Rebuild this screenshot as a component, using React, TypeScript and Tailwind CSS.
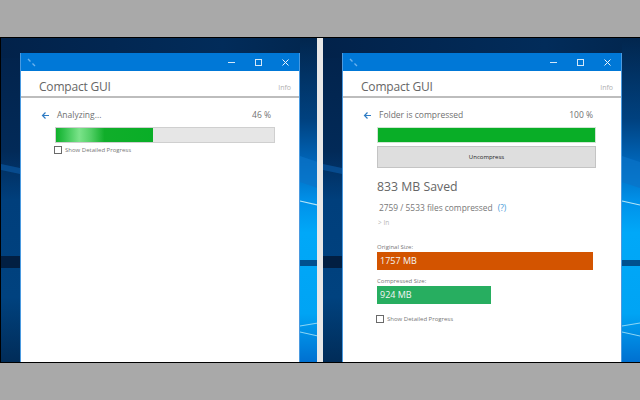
const FONT = "font-['Open_Sans','Noto_Sans',sans-serif]"

function Wallpaper({ id }: { id: string }) {
  return (
    <svg className="absolute inset-0" width="317" height="324" viewBox="0 0 317 324">
      <defs>
        <linearGradient id={`${id}V`} x1="0" y1="0" x2="0" y2="1">
          <stop offset="0" stopColor="#02224a" />
          <stop offset="0.35" stopColor="#022a58" />
          <stop offset="0.5" stopColor="#003f7c" />
          <stop offset="0.8" stopColor="#00427f" />
          <stop offset="1" stopColor="#012c58" />
        </linearGradient>
        <linearGradient id={`${id}R`} x1="0" y1="0" x2="0" y2="1">
          <stop offset="0" stopColor="#02264e" />
          <stop offset="0.25" stopColor="#00417f" />
          <stop offset="0.38" stopColor="#0065b8" />
          <stop offset="0.5" stopColor="#0090e8" />
          <stop offset="0.6" stopColor="#00a8f8" />
          <stop offset="0.85" stopColor="#00a4f4" />
          <stop offset="1" stopColor="#0070d0" />
        </linearGradient>
        <linearGradient id={`${id}T`} x1="0" y1="0" x2="1" y2="0">
          <stop offset="0" stopColor="#02224a" />
          <stop offset="0.7" stopColor="#022c5a" />
          <stop offset="1" stopColor="#02264e" />
        </linearGradient>
      </defs>
      <rect width="317" height="324" fill={`url(#${id}V)`} />
      <rect width="317" height="20" fill={`url(#${id}T)`} />
      <rect x="299" width="18" height="324" fill={`url(#${id}R)`} />
      <path d="M299 118L317 124V150L299 144Z" fill="#0a74c8" opacity="0.7" />
      <path d="M0 126L19 130V136L0 132Z" fill="#0c5ba8" opacity="0.6" />
      <rect y="218" width="20" height="12" fill="#021f42" />
      <rect x="299" y="222" width="18" height="6" fill="#00508f" />
      <path d="M299 163L317 167" stroke="#b5e6f8" strokeWidth="1.2" />
      <path d="M299 288L317 285M299 294L317 298" stroke="#8cd6f5" strokeWidth="1" />
    </svg>
  )
}

function TitleBar() {
  return (
    <div className="h-[18px] bg-[#0078d7] flex items-center text-white">
      <svg className="ml-[6px]" width="9" height="9" viewBox="0 0 9 9" stroke="#6db3ee" strokeWidth="1.4" fill="none">
        <path d="M1 1L3.5 3.5M5.5 5.5L8 8" />
      </svg>
      <div className="flex-1" />
      <svg width="7" height="8" viewBox="0 0 7 8" stroke="#d5e8f8" strokeWidth="1" fill="none">
        <path d="M0 4.5H7" />
      </svg>
      <svg className="ml-[20px]" width="7" height="7" viewBox="0 0 7 7" stroke="#d5e8f8" strokeWidth="1" fill="none">
        <rect x="0.5" y="0.5" width="6" height="6" />
      </svg>
      <svg className="ml-[20px] mr-[10px]" width="7" height="7" viewBox="0 0 7 7" stroke="#eef6fd" strokeWidth="1" fill="none">
        <path d="M0.5 0.5L6.5 6.5M6.5 0.5L0.5 6.5" />
      </svg>
    </div>
  )
}

function Header() {
  return (
    <div className="h-[27px] flex items-end justify-between border-b-2 border-[#bdbdbd] pb-[3px] pl-[18px] pr-[8px]">
      <span className="text-[12px] leading-none tracking-[-0.2px] text-[#666666]">Compact GUI</span>
      <span className="text-[7px] leading-none text-[#b0b0b0] mb-[2px]">Info</span>
    </div>
  )
}

function StatusRow({ label, percent }: { label: string; percent: string }) {
  return (
    <div className="flex items-center h-[14px] pl-[20px] pr-[28px] text-[8.5px] text-[#707070]">
      <svg width="9" height="9" viewBox="0 0 9 9" stroke="#2e7cc4" strokeWidth="1.2" fill="none">
        <path d="M8 4.5H1.5M4.5 1.5L1.5 4.5L4.5 7.5" />
      </svg>
      <span className="ml-[7px] flex-1">{label}</span>
      <span>{percent}</span>
    </div>
  )
}

function DetailCheck({ className }: { className: string }) {
  return (
    <div className={`flex items-center ${className}`}>
      <div className="w-[8px] h-[8px] border border-[#6a6a6a] bg-white" />
      <span className="ml-[3px] text-[6px] leading-none text-[#777777]">Show Detailed Progress</span>
    </div>
  )
}

function SizeBar({ label, value, width, color }: { label: string; value: string; width: string; color: string }) {
  return (
    <div>
      <div className="text-[6px] leading-[8px] text-[#777777]">{label}</div>
      <div className={`h-[18px] mt-[1px] flex items-center pl-[3px] text-[9px] text-[#f4f4f4] ${width} ${color}`}>{value}</div>
    </div>
  )
}

function AnalyzingWindow() {
  return (
    <>
      <div className="mt-[10px]">
        <StatusRow label="Analyzing..." percent="46 %" />
      </div>
      <div className="ml-[34px] mt-[5px] w-[220px] h-[16px] bg-[#e6e6e6] border border-[#cfcfcf] flex">
        <div className="w-[97px] bg-[linear-gradient(90deg,#0fb02a_0%,#2fc14a_8%,#7be38a_24%,#52cf66_36%,#10ae2a_50%,#09ae27_100%)]" />
      </div>
      <DetailCheck className="ml-[33px] mt-[3px]" />
    </>
  )
}

function CompressedWindow() {
  return (
    <>
      <div className="mt-[10px]">
        <StatusRow label="Folder is compressed" percent="100 %" />
      </div>
      <div className="ml-[34px] mt-[5px] w-[219px] h-[16px] bg-[#09ae27] border border-[#cfe5d2]" />
      <div className="ml-[34px] mt-[3px] w-[219px] h-[22px] bg-[#dedede] border border-[#c4c4c4] flex items-center justify-center text-[6px] text-[#222222]">
        Uncompress
      </div>
      <div className="ml-[34px] mt-[11px] text-[12.3px] leading-[16px] text-[#666666]">833 MB Saved</div>
      <div className="ml-[36px] mt-[7px] text-[8.4px] leading-[12px] text-[#777777] flex">
        <span>2759 / 5533 files compressed</span>
        <span className="ml-[5px] text-[#4a9bd8]">(?)</span>
      </div>
      <div className="ml-[35px] mt-[5px] text-[6.5px] leading-[8px] text-[#b5b5b5]">&gt; In</div>
      <div className="ml-[34px] mt-[16px] flex flex-col gap-[7px]">
        <SizeBar label="Original Size:" value="1757 MB" width="w-[216px]" color="bg-[#d35400]" />
        <SizeBar label="Compressed Size:" value="924 MB" width="w-[114px]" color="bg-[#27ae60]" />
      </div>
      <DetailCheck className="ml-[33px] mt-[11px]" />
    </>
  )
}

function Panel({ children, id, width }: { children: React.ReactNode; id: string; width: string }) {
  return (
    <div className={`relative h-full overflow-hidden ${width}`}>
      <Wallpaper id={id} />
      <div className="relative ml-[19px] mt-[15px] h-[309px] w-[280px] bg-white border-x border-[#4a9ae0] flex flex-col">
        <TitleBar />
        <Header />
        {children}
      </div>
    </div>
  )
}

export default function App() {
  return (
    <div className={`w-[640px] h-[400px] bg-[#a9a9a9] overflow-hidden pt-[37px] ${FONT}`}>
      <div className="h-[326px] flex bg-black border-y border-black pl-[1px]">
        <Panel id="left" width="w-[316px]">
          <AnalyzingWindow />
        </Panel>
        <div className="w-[6px] bg-[#e8e8e8]" />
        <Panel id="right" width="w-[317px]">
          <CompressedWindow />
        </Panel>
      </div>
    </div>
  )
}
